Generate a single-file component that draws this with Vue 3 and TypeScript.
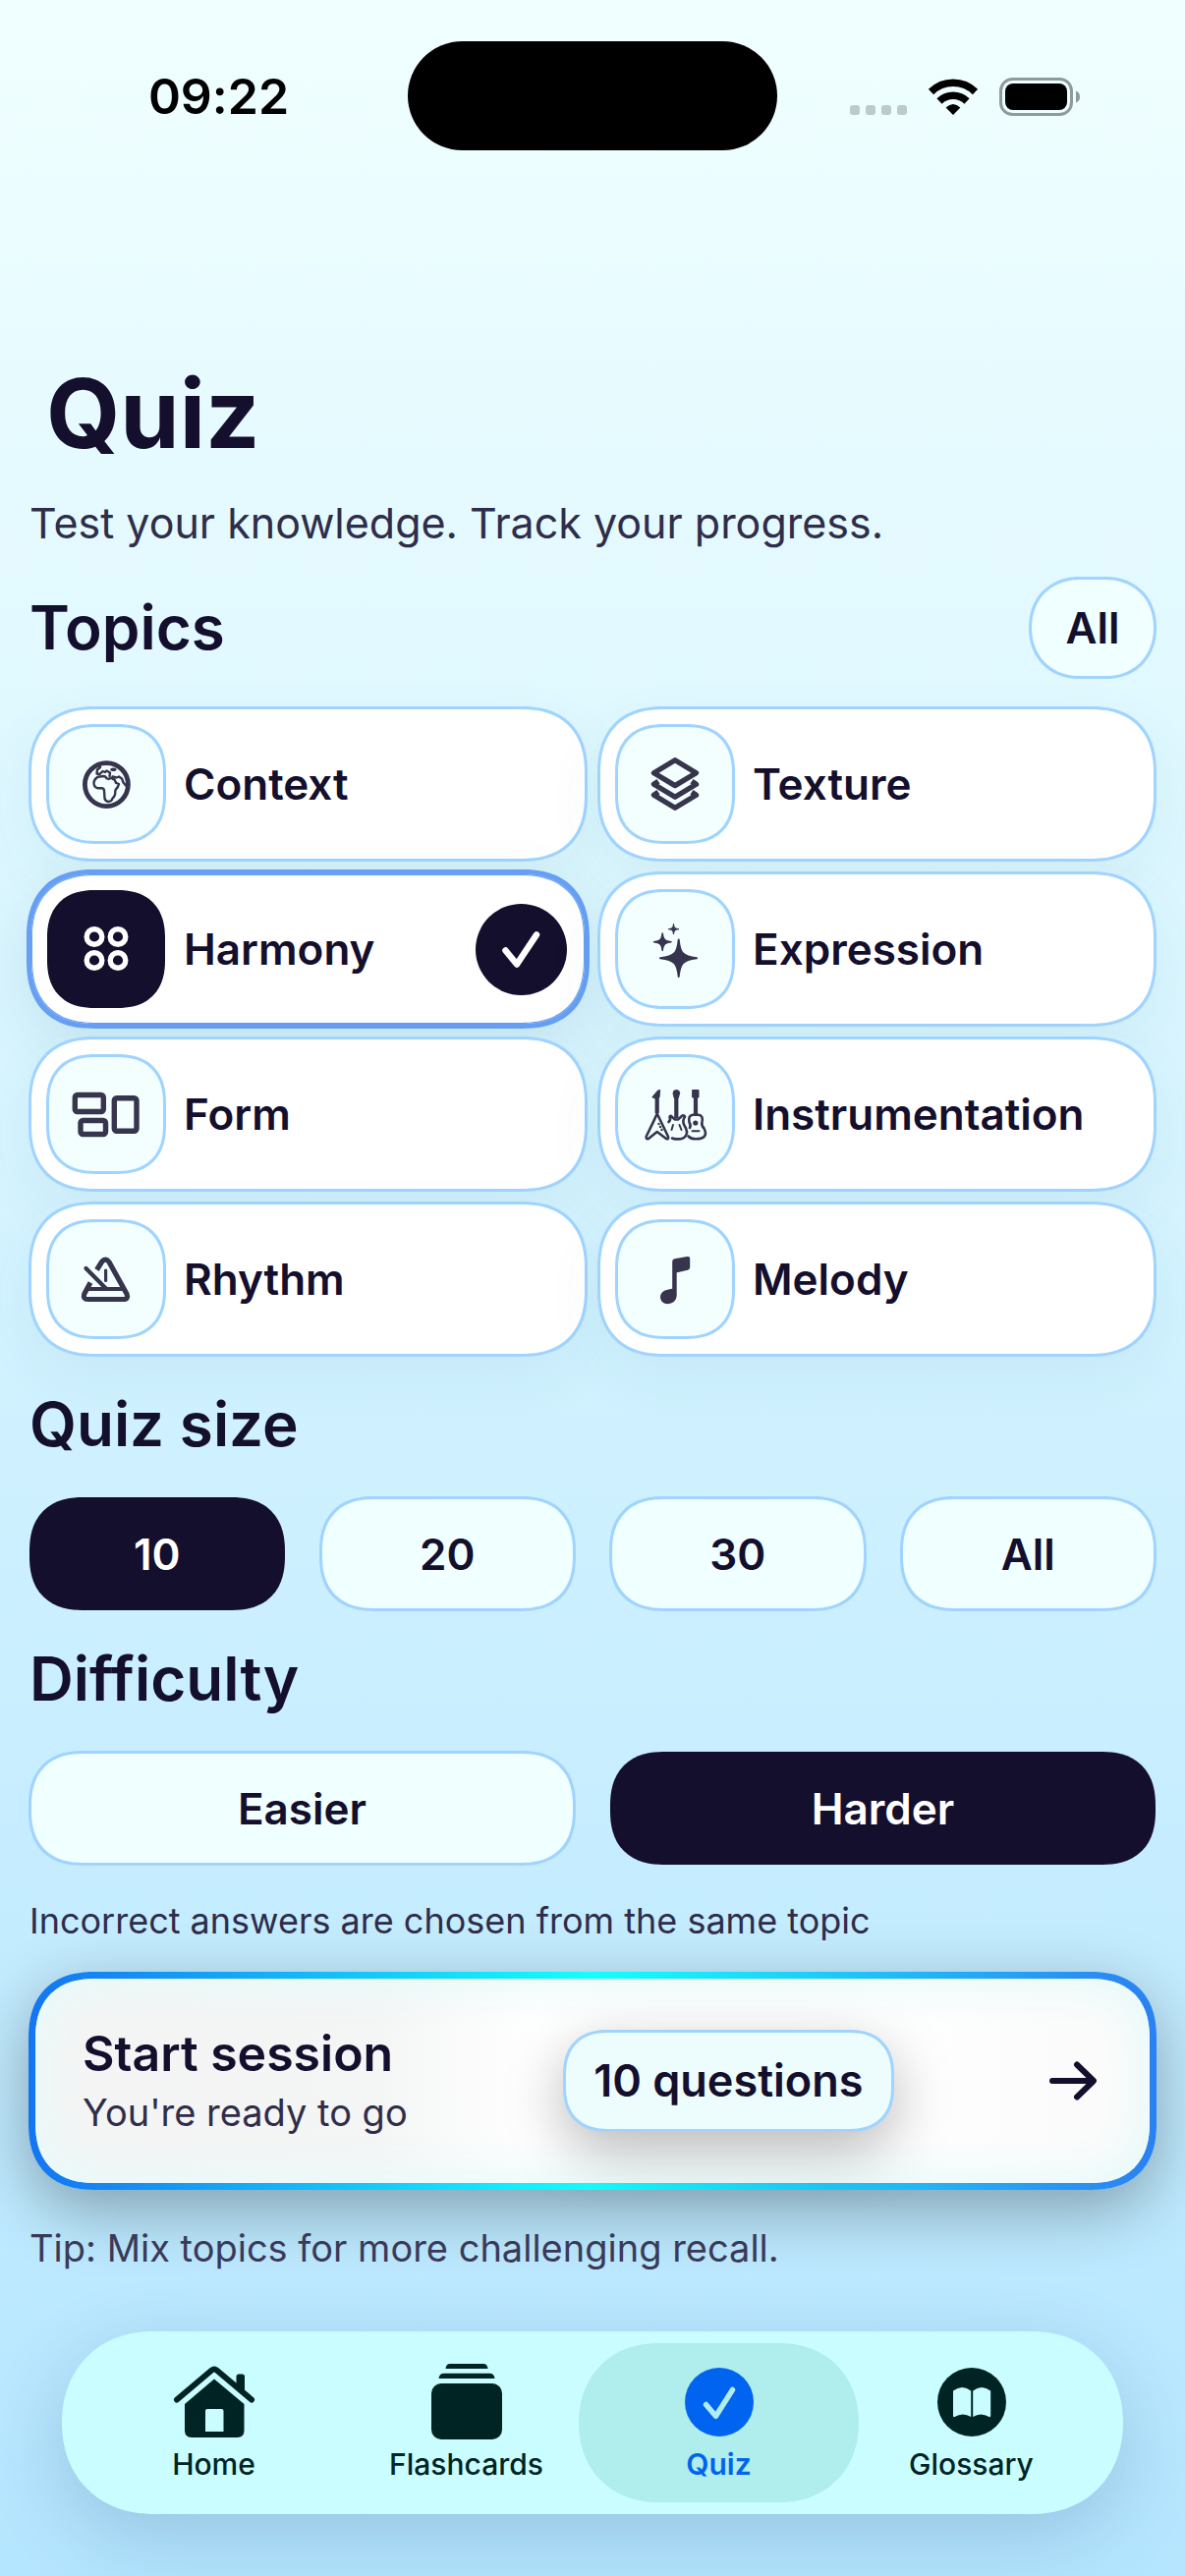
<script setup lang="ts">
import { computed, ref } from 'vue'

interface Topic {
  id: string
  label: string
}

const topics: Topic[] = [
  { id: 'context', label: 'Context' },
  { id: 'texture', label: 'Texture' },
  { id: 'harmony', label: 'Harmony' },
  { id: 'expression', label: 'Expression' },
  { id: 'form', label: 'Form' },
  { id: 'instrumentation', label: 'Instrumentation' },
  { id: 'rhythm', label: 'Rhythm' },
  { id: 'melody', label: 'Melody' },
]
const sizes: string[] = ['10', '20', '30', 'All']
const levels: string[] = ['Easier', 'Harder']
const tabs: string[] = ['Home', 'Flashcards', 'Quiz', 'Glossary']

const selected = ref<string[]>(['harmony'])
const size = ref<string>('10')
const level = ref<string>('Harder')
const activeTab = ref<string>('Quiz')

const questionLabel = computed<string>(() => `${size.value} questions`)

function toggleTopic(id: string): void {
  selected.value = selected.value.includes(id)
    ? selected.value.filter((t) => t !== id)
    : [...selected.value, id]
}

function selectAll(): void {
  selected.value = topics.map((t) => t.id)
}
</script>

<template>
  <div class="screen">
    <header class="status">
      <time class="clock">09:22</time>
      <div class="island"></div>
      <div class="signals">
        <svg width="58" height="40" viewBox="0 0 58 40" fill="#bccaca" aria-hidden="true">
          <rect x="0" y="29" width="10" height="10" rx="3" />
          <rect x="16" y="29" width="10" height="10" rx="3" />
          <rect x="32" y="29" width="10" height="10" rx="3" />
          <rect x="48" y="29" width="10" height="10" rx="3" />
        </svg>
        <svg width="52" height="40" viewBox="0 0 52 40" fill="none" stroke="#000" stroke-width="7.5" aria-hidden="true">
          <path d="M3.500 15.500A32 32 0 0 1 48.500 15.500" />
          <path d="M12 25A20 20 0 0 1 40 25" />
          <path d="M18.600 31.600Q26 24.400 33.400 31.600L26 39z" fill="#000" stroke="none" />
        </svg>
        <svg width="84" height="40" viewBox="0 0 84 40" aria-hidden="true">
          <rect x="1.500" y="2.500" width="72" height="36" rx="12" fill="none" stroke="#8f9a9a" stroke-width="3" />
          <rect x="6" y="7" width="63" height="27" rx="8" fill="#000" />
          <path d="M78 14.500Q82 16 82 20.500T78 26.500z" fill="#8f9a9a" />
        </svg>
      </div>
    </header>

    <main class="content">
      <div class="intro">
        <h1>Quiz</h1>
        <p class="lead">Test your knowledge. Track your progress.</p>
      </div>

      <div class="head">
        <h2>Topics</h2>
        <button type="button" class="all" @click="selectAll">All</button>
      </div>

      <div class="topics">
        <button
          v-for="t in topics"
          :key="t.id"
          type="button"
          class="topic"
          :class="{ on: selected.includes(t.id) }"
          :aria-pressed="selected.includes(t.id)"
          @click="toggleTopic(t.id)"
        >
          <span class="tile">
            <svg class="glyph" width="72" height="72" viewBox="0 0 72 72" fill="none" stroke="currentColor" stroke-linejoin="round" stroke-linecap="round" aria-hidden="true">
              <g v-if="t.id === 'context'" stroke-width="2.400">
                <circle cx="36.400" cy="36.600" r="22" stroke-width="4.800" />
                <path d="M23.500 34.500Q24 30.500 27.500 28.800L33.500 28Q35.500 28 36 29.800L38.500 31 41 29.800 44.500 31.500 46 34.800 49 36Q48.500 39 45.500 42L45 47Q44 49.500 42.600 50.500 41.500 54 38.400 54 35 53.500 34.500 50.500L34 42.500Q33.500 40 31 40.200L27 40.200Q23.500 39 23.500 34.500z" />
                <path d="M29 16.500L30 19 27 21.500 26.500 25.500 29.500 26 32.500 23 35 24 36.500 22.500 40 24.500 39.500 28" />
                <path d="M43 31L42.500 28.500 46.500 29.500 49 28.500 52 30.500 53.500 34.500 56 37.500" />
                <ellipse cx="43.400" cy="21.300" rx="2" ry="0.600" />
              </g>
              <g v-else-if="t.id === 'texture'" stroke-width="5.400">
                <path d="M36 11.800L57.500 24.700 36 37.600 14.500 24.700z" />
                <path d="M19 33.200L14.500 36.300 36 49.200 57.500 36.300 53 33.200" stroke-linecap="butt" />
                <path d="M19 44.200L14.500 47.300 36 60.200 57.500 47.300 53 44.200" stroke-linecap="butt" />
              </g>
              <g v-else-if="t.id === 'harmony'" stroke-width="5.400">
                <circle cx="24" cy="23.500" r="7.800" />
                <circle cx="48" cy="23.500" r="7.800" />
                <circle cx="24" cy="47.500" r="7.800" />
                <circle cx="48" cy="47.500" r="7.800" />
              </g>
              <g v-else-if="t.id === 'expression'" fill="currentColor" stroke-width="1">
                <path d="M39.700 26.500C41 40 43.500 43.500 58 45.300 43.500 47 41 51 39.700 64 38.400 51 36 47 21 45.300 36 43.500 38.400 40 39.700 26.500z" stroke-width="2" />
                <path d="M23.200 20C24 26.500 25.500 28 32 28.700 25.500 29.500 24 31 23.200 37.500 22.500 31 21 29.500 14.500 28.700 21 28 22.500 26.500 23.200 20z" stroke-width="1.500" />
                <path d="M34.500 10.500C35 14.300 36 15.200 40 15.700 36 16.200 35 17.200 34.500 21 34 17.200 33 16.200 29.200 15.700 33 15.200 34 14.300 34.500 10.500z" />
              </g>
              <g v-else-if="t.id === 'form'" stroke-width="5.400">
                <rect x="4.300" y="16.500" width="29" height="17" rx="2.500" />
                <rect x="10" y="42.500" width="25.500" height="14" rx="2.500" />
                <rect x="44.300" y="19.800" width="22.700" height="33.500" rx="2.500" />
              </g>
              <g v-else-if="t.id === 'instrumentation'" stroke-width="2.600">
                <g fill="currentColor" stroke-width="1">
                  <path d="M13 18.500L18.500 12 20.700 11.500 20 19 17.500 20.500z" />
                  <path d="M34 14.500Q34 11.500 37.300 11.500T40.700 14.500L39.300 19.500H35.500z" />
                  <path d="M54 11.500H60V19H54z" />
                </g>
                <path d="M17.700 18V35M37.300 18V40M57 18V36" stroke-width="4.200" stroke-linecap="butt" />
                <path d="M17.700 35.500Q15.500 41 6.800 58.500 6 62 9 61L17.700 54 27 61Q30 62 28.800 58.500 20.500 41 17.700 35.500z" />
                <path d="M29.500 44Q32 41.500 30.500 38.800 31.500 36.500 33 39L36 41.500H39L42 38.800Q44.500 35.800 46 38.500 43 43 45.500 47.500C51.500 57 45.500 62 38 61.300Q35 61.500 33 60.500" />
                <path d="M34 47L32.500 52M40.500 47L42.500 52" stroke-width="2" />
                <path d="M51 50Q52.500 47.500 50.500 44.500 49 37.500 54 36.800H60Q65 37.500 63.500 44 62.500 47.500 65.500 50.500C70 59 63.500 61.500 57 61.300Q52.500 61.500 49.500 58.500" />
                <path d="M53.500 53.300H60.500" stroke-width="2" />
                <g fill="currentColor" stroke="none">
                  <circle cx="56.800" cy="45" r="2.600" />
                  <circle cx="19.500" cy="46" r="1.200" />
                  <circle cx="21" cy="49" r="1.200" />
                  <circle cx="22.500" cy="52" r="1.200" />
                </g>
              </g>
              <g v-else-if="t.id === 'rhythm'" stroke-width="5.200">
                <path d="M26.500 26.500L31.500 18.500Q35.300 13.800 39 18.500L57 51Q59 56.500 53.500 56.500H17.500Q12 56.500 13.800 51L20 39.500" stroke-linecap="butt" />
                <path d="M17.500 46H54" stroke-width="4" />
                <path d="M15.500 25L35.300 45" stroke-width="4.200" />
                <path d="M35.600 27V37.500" stroke-width="3.200" />
              </g>
              <g v-else fill="currentColor" stroke-width="2">
                <path d="M34.200 18Q34.200 16.600 35.700 16.200L48.500 13.900Q50.200 13.700 50.200 15.200V24Q50.200 25.400 48.700 25.800L36.700 28.500V53C36.500 57.500 33 60.200 28.500 60.200 24.500 60.200 22 57.700 22 54.500 22 50.500 25 48.500 28.500 47.700L34.200 46.500z" />
              </g>
            </svg>
          </span>
          <span class="name">{{ t.label }}</span>
          <svg v-if="selected.includes(t.id)" class="tick" width="93" height="93" viewBox="0 0 93 93" fill="none" aria-hidden="true">
            <circle cx="46.500" cy="46.500" r="46.500" fill="#140f2d" />
            <path d="M30.500 47.500L42 61.500 62 31.500" stroke="#fff" stroke-width="6.500" stroke-linecap="round" stroke-linejoin="round" />
          </svg>
        </button>
      </div>

      <h2 class="solo">Quiz size</h2>
      <div class="row">
        <button
          v-for="s in sizes"
          :key="s"
          type="button"
          class="choice"
          :class="{ on: size === s }"
          :aria-pressed="size === s"
          @click="size = s"
        >{{ s }}</button>
      </div>

      <h2 class="solo">Difficulty</h2>
      <div class="row">
        <button
          v-for="l in levels"
          :key="l"
          type="button"
          class="choice"
          :class="{ on: level === l }"
          :aria-pressed="level === l"
          @click="level = l"
        >{{ l }}</button>
      </div>

      <p class="note">Incorrect answers are chosen from the same topic</p>

      <button type="button" class="start">
        <span class="start-text">
          <span class="start-title">Start session</span>
          <span class="start-sub">You're ready to go</span>
        </span>
        <span class="chip">{{ questionLabel }}</span>
        <svg width="48" height="40" viewBox="0 0 48 40" fill="none" stroke="#140f2d" stroke-width="6" stroke-linecap="round" stroke-linejoin="round" aria-hidden="true">
          <path d="M3 20H44M28 3.500L45 20 28 36.500" />
        </svg>
      </button>

      <p class="tip">Tip: Mix topics for more challenging recall.</p>
    </main>

    <nav class="tabs" aria-label="Main">
      <a
        v-for="tab in tabs"
        :key="tab"
        href="#"
        class="tab"
        :class="{ on: activeTab === tab }"
        :aria-current="activeTab === tab ? 'page' : undefined"
        @click.prevent="activeTab = tab"
      >
        <svg width="84" height="80" viewBox="0 0 84 80" fill="currentColor" aria-hidden="true">
          <g v-if="tab === 'Home'">
            <path d="M4 37.500L39.500 7.500Q42 5.500 44.500 7.500L80 37.500" fill="none" stroke="currentColor" stroke-width="6" stroke-linecap="round" />
            <path d="M64.500 26V14Q64.500 11.500 67 11.500H70.500Q73 11.500 73 14V33z" />
            <path d="M42 16.500L72.500 42V69Q72.500 76 65.500 76H19Q12 76 12 69V42zM35 47Q33 47 33 49V70H51.500V49Q51.500 47 49.500 47z" fill-rule="evenodd" />
          </g>
          <g v-else-if="tab === 'Flashcards'">
            <rect x="6" y="21" width="72" height="57" rx="10" />
            <path d="M13.500 16Q14 10.700 19 10.700H65Q70 10.700 70.500 16z" />
            <path d="M20.500 6Q21 1 25 1H59Q63 1 63.500 6z" />
          </g>
          <g v-else-if="tab === 'Quiz'">
            <circle cx="42" cy="40" r="35" />
            <path d="M28.500 42.500L38.500 54.300 55.500 27.500" fill="none" stroke="#b0eded" stroke-width="5.500" stroke-linecap="round" stroke-linejoin="round" />
          </g>
          <g v-else>
            <circle cx="42" cy="40" r="35" />
            <path d="M41.200 28.500Q32.500 21.500 23 28.500V54Q23 55.500 24.500 55 33 50 41.200 55z" fill="#cafdff" />
            <path d="M43.200 28.500Q52 21.500 61.200 28.500V54Q61.200 55.500 59.700 55 51 50 43.200 55z" fill="#cafdff" />
          </g>
        </svg>
        <span>{{ tab }}</span>
      </a>
    </nav>
  </div>
</template>

<style>
body {
  margin: 0;
}
</style>

<style scoped>
.screen {
  --ink: #140f2d;
  --soft: #37344d;
  --line: #a0d4ff;
  --mint: #f0ffff;
  box-sizing: border-box;
  min-height: 100vh;
  display: flex;
  flex-direction: column;
  background: linear-gradient(#f0ffff, #b5e6ff);
  color: var(--ink);
  font-family: Inter, "Liberation Sans", sans-serif;
  font-variant-ligatures: none;
}

.screen *,
.screen *::before {
  box-sizing: border-box;
}

button {
  margin: 0;
  font: inherit;
  color: inherit;
  cursor: pointer;
}

h1,
h2,
p {
  margin: 0;
}

.status {
  display: grid;
  grid-template-columns: 1fr 376px 1fr;
  align-items: center;
  height: 195px;
}

.clock {
  padding-left: 30px;
  text-align: center;
  font-size: 50px;
  font-weight: 600;
  line-height: 60px;
  color: #000;
}

.island {
  height: 111px;
  border-radius: 56px;
  background: #000;
}

.signals {
  display: flex;
  justify-content: center;
  gap: 21px;
  padding-right: 31px;
}

.content {
  display: flex;
  flex-direction: column;
  gap: 28px;
  padding: 166px 29px 54px;
}

h1 {
  padding-left: 18px;
  font-size: 97px;
  font-weight: 700;
  line-height: 120px;
}

.lead {
  margin-top: 24px;
  padding-left: 1px;
  font-size: 43px;
  line-height: 54px;
  color: #2f2d4a;
}

.head {
  display: flex;
  align-items: center;
  justify-content: space-between;
}

h2 {
  padding-left: 1px;
  font-size: 62px;
  font-weight: 600;
  line-height: 82px;
}

.solo {
  padding-bottom: 4px;
}

.all {
  width: 130px;
  height: 104px;
  padding: 0;
  border: 3px solid var(--line);
  border-radius: 52px;
  background: var(--mint);
  font-size: 44px;
  font-weight: 600;
}

.topics {
  display: grid;
  grid-template-columns: 1fr 1fr;
  gap: 10px;
}

.topic {
  display: flex;
  align-items: center;
  gap: 18px;
  height: 158px;
  padding: 0 18px 0 15px;
  border: 3px solid var(--line);
  border-radius: 58px;
  background: #fff;
  box-shadow: 0 20px 60px rgba(40, 110, 120, 0.06);
  text-align: left;
}

.topic.on {
  border-color: #669ff3;
  box-shadow: 0 0 0 2px #669ff3, inset 0 0 0 1px #669ff3, 0 20px 60px rgba(40, 110, 120, 0.12);
}

.tile {
  display: flex;
  align-items: center;
  justify-content: center;
  width: 122px;
  height: 122px;
  border: 3px solid var(--line);
  border-radius: 42px;
  background: #f3ffff;
  color: var(--soft);
}

.on .tile {
  border: 1px solid transparent;
  background: var(--ink) padding-box;
  color: #fff;
}

.glyph,
.tick {
  flex: none;
}

.name {
  flex: 1;
  font-size: 44px;
  font-weight: 600;
  line-height: 54px;
}

.row {
  display: flex;
  gap: 34px;
}

.choice {
  flex: 1;
  height: 117px;
  padding: 0;
  border: 3px solid var(--line);
  border-radius: 50px;
  background: var(--mint);
  font-size: 44px;
  font-weight: 600;
}

.choice.on {
  padding: 2px;
  border: 1px solid transparent;
  background: var(--ink) padding-box;
  color: #fff;
}

.note {
  padding: 4px 0 0 1px;
  font-size: 36px;
  line-height: 48px;
  color: #2f2d4a;
}

.start {
  display: flex;
  align-items: center;
  justify-content: space-between;
  height: 222px;
  padding: 0 54px 0 48px;
  border: 7px solid transparent;
  border-radius: 58px;
  background:
    linear-gradient(90deg, #f4f4f4, #f4f5f5 30%, #fff 45%, #fff 75%, #fafafa) padding-box,
    linear-gradient(90deg, #1475f2, #14ffff 50%, #2b80f2) border-box;
  box-shadow: inset 0 0 40px 14px #eafafa, 0 20px 66px rgba(0, 0, 0, 0.32);
  text-align: left;
}

.start-text {
  display: flex;
  flex-direction: column;
  gap: 2px;
}

.start-title {
  font-size: 50px;
  font-weight: 600;
  line-height: 62px;
}

.start-sub {
  font-size: 38px;
  line-height: 54px;
  color: #2f2d4a;
}

.chip {
  padding: 22px 28px;
  border: 3px solid var(--line);
  border-radius: 38px;
  background: #edfcfc;
  box-shadow: 0 20px 60px rgba(0, 0, 0, 0.28);
  font-size: 45px;
  font-weight: 600;
  line-height: 54px;
}

.tip {
  padding-left: 1px;
  font-size: 38px;
  line-height: 62px;
  color: #3a3a58;
}

.tabs {
  display: flex;
  margin: auto 63px 63px;
  padding: 12px 26px;
  border-radius: 93px;
  background: #cafdff;
  box-shadow: 0 24px 80px rgba(20, 60, 110, 0.2);
}

.tab {
  position: relative;
  z-index: 0;
  flex: 1;
  display: flex;
  flex-direction: column;
  align-items: center;
  gap: 5px;
  height: 162px;
  padding-top: 20px;
  color: #002424;
  font-size: 30px;
  font-weight: 500;
  line-height: 36px;
  text-decoration: none;
}

.tab.on {
  color: #0064f0;
  font-weight: 600;
}

.tab.on::before {
  content: "";
  position: absolute;
  inset: 0 -14px;
  z-index: -1;
  border-radius: 81px;
  background: #b0eded;
}

/* Continuous corners where the browser can draw them */
@supports (corner-shape: superellipse(1.25)) {
  .topic,
  .start,
  .choice,
  .tile,
  .chip,
  .all,
  .tabs,
  .tab.on::before {
    corner-shape: superellipse(1.25);
  }

  .all,
  .tabs,
  .tab.on::before {
    corner-shape: superellipse(1.1);
  }

  .topic,
  .start {
    border-radius: 68px;
  }

  .choice {
    border-radius: 56px;
  }

  .tile {
    border-radius: 50px;
  }

  .chip {
    border-radius: 46px;
  }
}
</style>
